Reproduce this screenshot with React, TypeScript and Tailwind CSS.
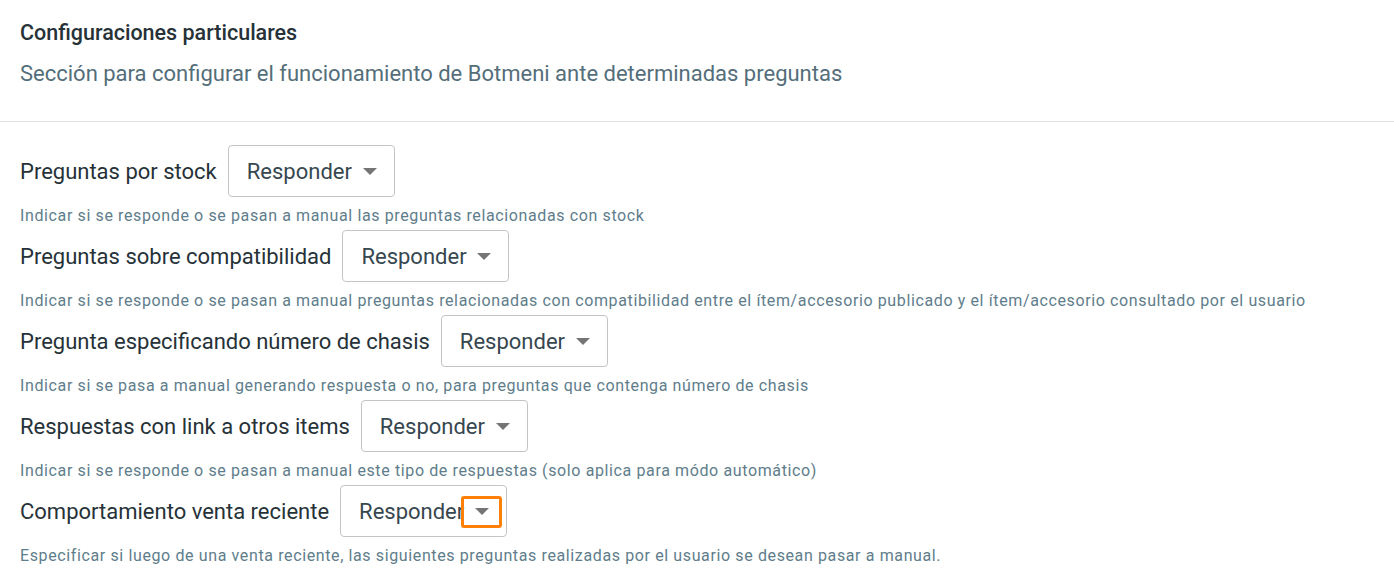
import React from 'react';

interface Setting {
  label: string;
  help: string;
  highlight?: boolean;
}

const settings: Setting[] = [
  {
    label: 'Preguntas por stock',
    help: 'Indicar si se responde o se pasan a manual las preguntas relacionadas con stock',
  },
  {
    label: 'Preguntas sobre compatibilidad',
    help: 'Indicar si se responde o se pasan a manual preguntas relacionadas con compatibilidad entre el ítem/accesorio publicado y el ítem/accesorio consultado por el usuario',
  },
  {
    label: 'Pregunta especificando número de chasis',
    help: 'Indicar si se pasa a manual generando respuesta o no, para preguntas que contenga número de chasis',
  },
  {
    label: 'Respuestas con link a otros items',
    help: 'Indicar si se responde o se pasan a manual este tipo de respuestas (solo aplica para módo automático)',
  },
  {
    label: 'Comportamiento venta reciente',
    help: 'Especificar si luego de una venta reciente, las siguientes preguntas realizadas por el usuario se desean pasar a manual.',
    highlight: true,
  },
];

function SelectBox({ highlight }: { highlight?: boolean }) {
  return (
    <div className="relative flex h-[52px] w-[167px] items-center rounded-[4px] border border-[#c4c4c4] pl-[18px] pr-[17px]">
      <span className="text-[22px] text-[#37474f]">Responder</span>
      <svg className="ml-auto" width="14" height="7" viewBox="0 0 14 7">
        <polygon points="0,0 14,0 7,7" fill="#757575" />
      </svg>
      {/* highlight marker around the dropdown arrow */}
      {highlight && (
        <div className="absolute right-[4px] top-[10px] h-[32px] w-[41px] rounded-[3px] border-[3.5px] border-[#ff8008]" />
      )}
    </div>
  );
}

export default function App() {
  return (
    <div className="min-h-screen bg-white font-['Roboto',sans-serif]">
      <div className="px-5 pb-[34px] pt-[20px]">
        <h2 className="text-[21.5px] font-medium leading-[26px] text-[#263238]">Configuraciones particulares</h2>
        <p className="mt-[15px] text-[22px] leading-[26px] text-[#546e7a]">
          Sección para configurar el funcionamiento de Botmeni ante determinadas preguntas
        </p>
      </div>
      <div className="h-px bg-[#e0e0e0]" />
      <div className="px-5 pt-[23px]">
        {settings.map((s) => (
          <div key={s.label} className="flex flex-col">
            <div className="flex items-center gap-[11px]">
              <span className="text-[22px] text-[#263238]">{s.label}</span>
              <SelectBox highlight={s.highlight} />
            </div>
            <p className="mb-[4px] mt-[9px] text-[16px] leading-[20px] tracking-[0.62px] text-[#607d8b]">{s.help}</p>
          </div>
        ))}
      </div>
    </div>
  );
}
